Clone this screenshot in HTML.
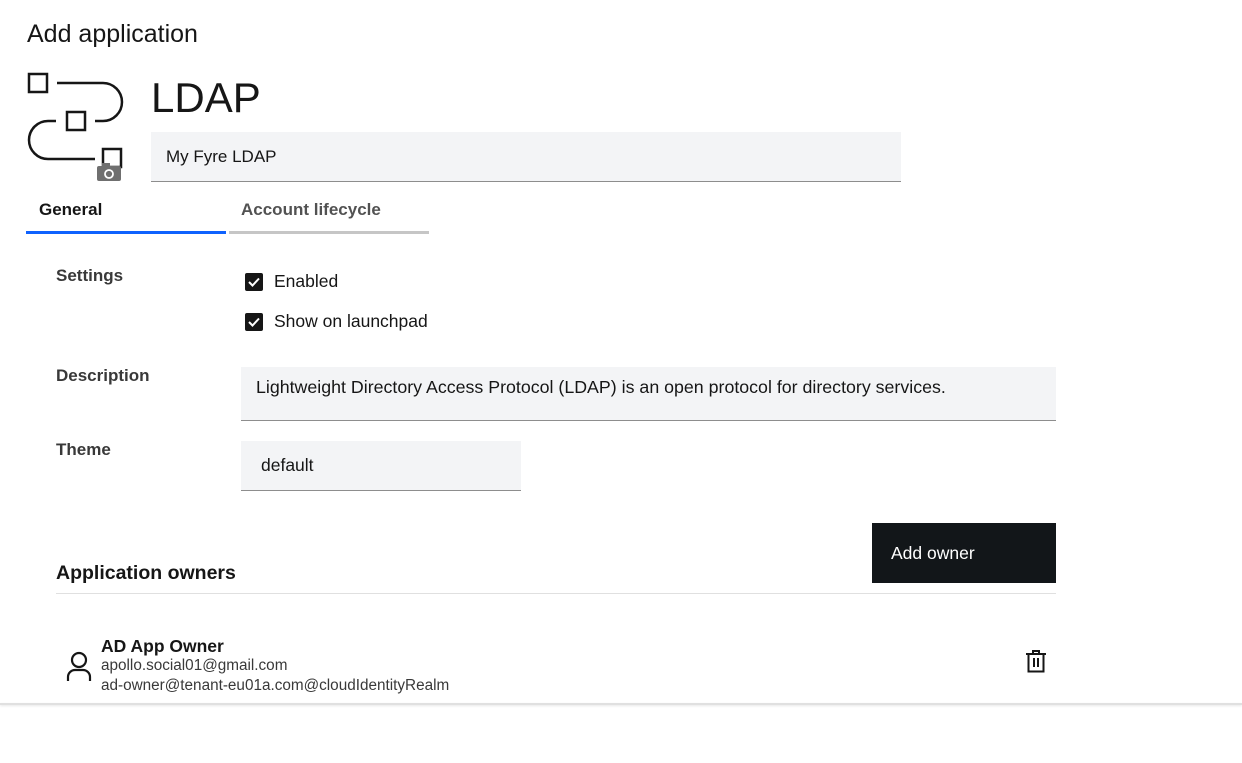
<!DOCTYPE html>
<html><head><style>
body{margin:0;width:1242px;height:763px;background:#fff;font-family:"Liberation Sans",sans-serif;color:#161616;position:relative;overflow:hidden}
.a{position:absolute}
.field{background:#f3f4f6;border-bottom:1px solid #8d8d8d;box-sizing:border-box}
.cb{width:18px;height:18px;background:#161616;border-radius:2px}
.lbl{font-size:17px;color:#393939;font-weight:bold}
</style></head><body>
<div class="a" style="left:27px;top:20px;font-size:25px;color:#161616">Add application</div>
<svg class="a" style="left:20px;top:60px" width="120" height="130" viewBox="0 0 120 130">
<g fill="none" stroke="#161616" stroke-width="2.5">
<rect x="9" y="14" width="18" height="18"/>
<rect x="47" y="52" width="18" height="18"/>
<rect x="83" y="89" width="18" height="18"/>
<path d="M37 23 H83 A19 19 0 0 1 83 61 H75"/>
<path d="M36 61 H28 A19 19 0 0 0 28 99 H75"/>
</g>
<rect x="77" y="106" width="24" height="15" rx="2" fill="#6f6f6f"/>
<rect x="82" y="103" width="8" height="4" fill="#6f6f6f"/>
<circle cx="89" cy="114" r="4" fill="none" stroke="#fff" stroke-width="1.8"/>
</svg>
<div class="a" style="left:151px;top:74px;font-size:42px">LDAP</div>
<div class="a field" style="left:151px;top:132px;width:750px;height:50px;padding:15px 15px;font-size:17px">My Fyre LDAP</div>
<div class="a" style="left:39px;top:200px;font-size:17px;font-weight:bold">General</div>
<div class="a" style="left:26px;top:231px;width:200px;height:3px;background:#0f62fe"></div>
<div class="a" style="left:241px;top:200px;font-size:17px;font-weight:bold;color:#525252">Account lifecycle</div>
<div class="a" style="left:229px;top:231px;width:200px;height:3px;background:#c6c6c6"></div>
<div class="a lbl" style="left:56px;top:266px">Settings</div>
<div class="a cb" style="left:245px;top:273px"><svg width="18" height="18"><path d="M4 9 L7.5 12.5 L14 5.5" stroke="#fff" stroke-width="2" fill="none"/></svg></div>
<div class="a" style="left:274px;top:271px;font-size:17.5px">Enabled</div>
<div class="a cb" style="left:245px;top:313px"><svg width="18" height="18"><path d="M4 9 L7.5 12.5 L14 5.5" stroke="#fff" stroke-width="2" fill="none"/></svg></div>
<div class="a" style="left:274px;top:311px;font-size:17.5px">Show on launchpad</div>
<div class="a lbl" style="left:56px;top:366px">Description</div>
<div class="a field" style="left:241px;top:367px;width:815px;height:54px;padding:10px 15px;font-size:17.8px">Lightweight Directory Access Protocol (LDAP) is an open protocol for directory services.</div>
<div class="a lbl" style="left:56px;top:440px">Theme</div>
<div class="a field" style="left:241px;top:441px;width:280px;height:50px;padding:14px 20px;font-size:17.5px">default</div>
<div class="a" style="left:872px;top:523px;width:184px;height:60px;background:#121619;color:#fff;font-size:17.5px;box-sizing:border-box;padding:20px 19px">Add owner</div>
<div class="a" style="left:56px;top:562px;font-size:19.5px;font-weight:bold">Application owners</div>
<div class="a" style="left:56px;top:593px;width:1000px;height:1px;background:#e0e0e0"></div>
<svg class="a" style="left:64px;top:650px" width="30" height="32" viewBox="0 0 30 32"><g fill="none" stroke="#161616" stroke-width="2.2"><circle cx="15" cy="10" r="7"/><path d="M4 31 V27 A7 7 0 0 1 11 20 H19 A7 7 0 0 1 26 27 V31"/></g></svg>
<div class="a" style="left:101px;top:636px;font-size:17.5px;font-weight:bold">AD App Owner</div>
<div class="a" style="left:101px;top:657px;font-size:15.3px;color:#393939">apollo.social01@gmail.com</div>
<div class="a" style="left:101px;top:677px;font-size:15.3px;color:#393939">ad-owner@tenant-eu01a.com@cloudIdentityRealm</div>
<svg class="a" style="left:1024px;top:649px" width="24" height="24" viewBox="0 0 24 24"><g fill="none" stroke="#161616" stroke-width="2"><path d="M2 5 H22 M9 5 V2 H15 V5 M4.5 5 V22.5 H19.5 V5 M10 9 V18 M14 9 V18"/></g></svg>
<div class="a" style="left:0;top:703px;width:1242px;height:2px;background:#e0e0e0;box-shadow:0 1px 2px rgba(0,0,0,.1)"></div>
</body></html>
